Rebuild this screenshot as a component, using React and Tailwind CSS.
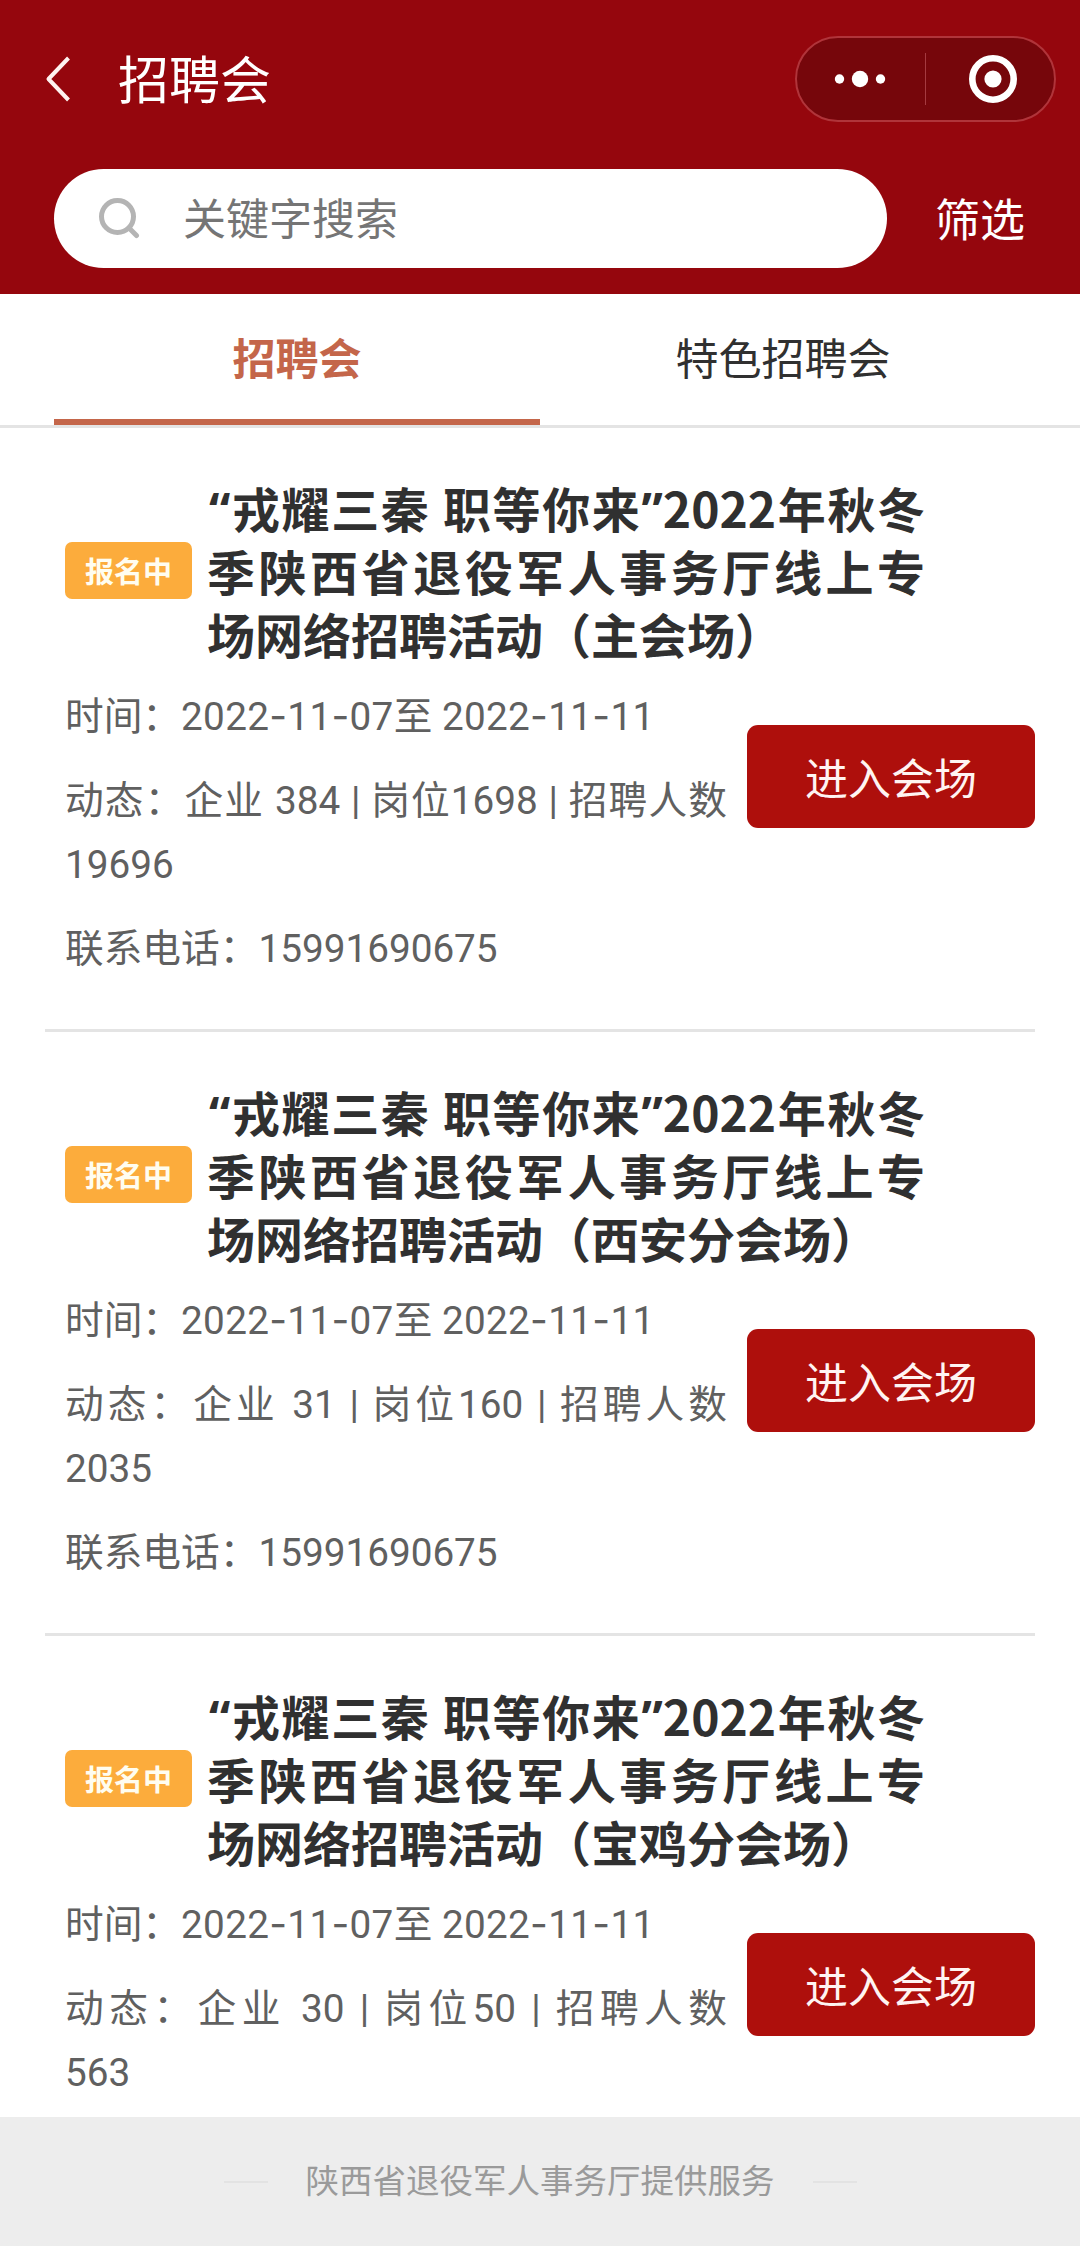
import React, { useState } from "react";

const fairs = [
  {
    id: 1,
    venue: "主会场",
    start: "2022-11-07",
    end: "2022-11-11",
    companies: 384,
    jobs: 1698,
    people: 19696,
    phone: "15991690675",
  },
  {
    id: 2,
    venue: "西安分会场",
    start: "2022-11-07",
    end: "2022-11-11",
    companies: 31,
    jobs: 160,
    people: 2035,
    phone: "15991690675",
  },
  {
    id: 3,
    venue: "宝鸡分会场",
    start: "2022-11-07",
    end: "2022-11-11",
    companies: 30,
    jobs: 50,
    people: 563,
  },
];

const tabs = ["招聘会", "特色招聘会"];

const Header = () => {
  const [keyword, setKeyword] = useState("");

  return (
    <header className="h-[294px] shrink-0 bg-[#95060d] text-white">
      {/* Title bar */}
      <div className="flex h-[158px] items-center pl-[45px] pr-6">
        <svg className="h-[46px] w-[26px] shrink-0" viewBox="0 0 26 46" fill="none" stroke="#fff2f0" strokeWidth="4">
          <path d="M23.5 2 L3.5 23 L23.5 44" strokeLinejoin="round" />
        </svg>
        <h1 className="ml-[47px] flex-1 pb-[4px] text-[51px] leading-[60px]">招聘会</h1>
        <div className="flex h-[86px] w-[261px] items-center rounded-full border-2 border-[#b0343a] bg-[#76060b]">
          <svg className="ml-[37px] h-[18px] w-[52px]" viewBox="0 0 52 18" fill="#fff">
            <circle cx="5.5" cy="9" r="4.7" />
            <circle cx="26" cy="9" r="8.2" />
            <circle cx="46.5" cy="9" r="4.7" />
          </svg>
          <div className="ml-[39px] h-[52px] w-px bg-[#a53a40]" />
          <svg className="ml-[42px] h-[50px] w-[50px]" viewBox="0 0 50 50">
            <circle cx="25" cy="25" r="20.7" fill="none" stroke="#fff" strokeWidth="6.6" />
            <circle cx="25" cy="25" r="8.6" fill="#fff" />
          </svg>
        </div>
      </div>

      {/* Search */}
      <div className="mt-[11px] flex items-center pl-[54px]">
        <label className="flex h-[99px] w-[833px] items-center rounded-full bg-white pl-[45px]">
          <svg className="h-[41px] w-[41px] shrink-0" viewBox="0 0 41 41" fill="none" stroke="#b4b4b4" strokeWidth="5">
            <circle cx="18.5" cy="18.5" r="16" />
            <path d="M30 30 L37.5 37.5" strokeLinecap="round" />
          </svg>
          <input
            type="text"
            value={keyword}
            onChange={(e) => setKeyword(e.target.value)}
            placeholder="关键字搜索"
            className="mb-[4px] ml-[43px] h-[64px] w-[600px] text-[43px] text-[#333] outline-none placeholder:text-[#757575]"
          />
        </label>
        <button className="mb-[2px] ml-[48px] text-[45px] leading-[64px]">筛选</button>
      </div>
    </header>
  );
};

// Dates use a wider hyphen than the digits' own font has
const DateText = ({ value }) => {
  const [year, month, day] = value.split("-");
  const dash = <span className="font-[Inter] leading-none">-</span>;

  return (
    <span className="tracking-[0.3px]">
      {year}{dash}{month}{dash}{day}
    </span>
  );
};

const FairItem = ({ fair }) => {
  return (
    <li className="h-[604px] shrink-0 border-b-[3px] border-[#e4e4e4] pl-5 pt-[48px]">
      <div className="flex items-center">
        <span className="flex h-[57px] w-[127px] items-center justify-center rounded-[7px] bg-[#fcac3c] text-[29px] font-bold text-[#fffdf0]">
          报名中
        </span>
        <h2 className="ml-[15px] w-[718px] text-[48px] font-bold leading-[63px] text-[#303030]">
          <span className="block pl-[2px] [text-align-last:justify]">
            <span className="font-['Noto_Sans'] leading-none">“</span>戎耀三秦 职等你来
            <span className="font-['Noto_Sans'] leading-none">”</span>2022年秋冬
          </span>
          <span className="block [text-align-last:justify]">季陕西省退役军人事务厅线上专</span>
          <span className="block">场网络招聘活动（{fair.venue}）</span>
        </h2>
      </div>

      <div className="mt-[20px] flex items-start">
        <div className="flex w-[662px] shrink-0 flex-col gap-5 font-[Roboto,'Noto_Sans_CJK_SC',sans-serif] text-[38.7px] leading-[64px] text-[#606060]">
          <p>
            时间：<DateText value={fair.start} />至 <DateText value={fair.end} />
          </p>
          <p>
            <span className="block [text-align-last:justify]">
              动态：企业 {fair.companies} | 岗位{fair.jobs} | 招聘人数
            </span>
            <span className="block">{fair.people}</span>
          </p>
          {fair.phone && <p>联系电话：{fair.phone}</p>}
        </div>
        <button className="ml-5 mt-[40px] h-[103px] w-[288px] rounded-[11px] bg-[#ae0f0c] pb-px text-[43px] text-[#fff4f2]">
          进入会场
        </button>
      </div>
    </li>
  );
};

const App = () => {
  const [active, setActive] = useState(0);

  return (
    <div className="flex h-[2246px] w-[1080px] flex-col overflow-hidden bg-white font-['Noto_Sans_CJK_SC',sans-serif]">
      <Header />

      {/* Tabs */}
      <nav className="flex h-[134px] shrink-0 border-b-[3px] border-[#e4e4e4] px-[54px]">
        {tabs.map((tab, index) => (
          <button
            key={tab}
            onClick={() => setActive(index)}
            className={`flex-1 border-b-[6px] text-[43px] ${
              active === index ? "border-[#c4664a] font-bold text-[#c4664a]" : "border-transparent text-[#303030]"
            }`}
          >
            {tab}
          </button>
        ))}
      </nav>

      {/* Fair list */}
      <ul className="flex min-h-0 flex-1 flex-col overflow-hidden px-[45px]">
        {fairs.map((fair) => (
          <FairItem key={fair.id} fair={fair} />
        ))}
      </ul>

      <footer className="flex h-[129px] shrink-0 items-center justify-center bg-[#ededed] text-[33.5px] text-[#9a9a9a]">
        <span className="h-[2px] w-[44px] bg-[#e3e3e3]" />
        <p className="mx-[38px] pb-[4px]">陕西省退役军人事务厅提供服务</p>
        <span className="h-[2px] w-[44px] bg-[#e3e3e3]" />
      </footer>
    </div>
  );
};

export default App;
